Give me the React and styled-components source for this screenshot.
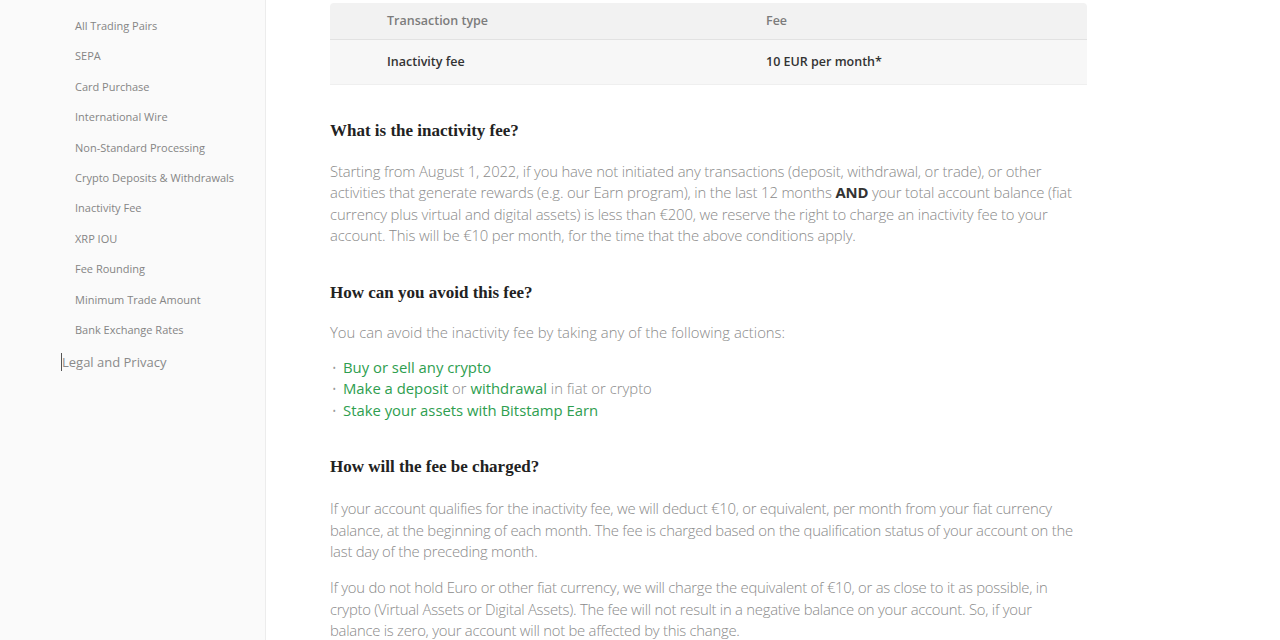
import React from "react";
import styled, { createGlobalStyle } from "styled-components";

const GlobalStyle = createGlobalStyle`
  html, body {
    margin: 0;
    padding: 0;
    background: #fff;
    font-family: "Open Sans", "Liberation Sans", sans-serif;
  }
`;

const Page = styled.div`
  display: flex;
  width: 1280px;
  height: 640px;
  overflow: hidden;
`;

const Sidebar = styled.nav`
  width: 266px;
  flex-shrink: 0;
  background: #fafafa;
  border-right: 1px solid #ececec;
  padding-top: 18px;
  box-sizing: border-box;
`;

const SubLink = styled.a`
  display: block;
  padding-left: 75px;
  height: 30.4px;
  font-size: 11px;
  line-height: 16px;
  color: #858585;
  text-decoration: none;
`;

const TopLink = styled.a`
  display: block;
  margin-left: 61px;
  font-size: 13px;
  line-height: 18px;
  color: #8a8a8a;
  text-decoration: none;
  margin-top: 1px;
  border-left: 1px solid #555;
`;

const Main = styled.main`
  flex: 1;
  padding: 3px 0 0 64px;
`;

const Content = styled.div`
  width: 757px;
`;

const Table = styled.div`
  display: grid;
  grid-template-columns: 379px 1fr;
  font-size: 12.5px;
  margin-bottom: 35px;
`;

const HeadCell = styled.div`
  background: #f2f2f2;
  height: 36px;
  line-height: 36px;
  padding-left: 57px;
  color: #7c7c7c;
  font-weight: 600;
  border-bottom: 1px solid #e2e2e2;
  border-radius: ${p => (p.$first ? "4px 0 0 0" : "0 4px 0 0")};
`;

const Cell = styled.div`
  background: #f7f7f7;
  height: 44px;
  line-height: 44px;
  padding-left: 57px;
  color: #333;
  font-weight: 600;
  border-bottom: 1px solid #efefef;
`;

const Heading = styled.h3`
  font-family: "Liberation Serif", "DejaVu Serif", serif;
  font-weight: bold;
  font-size: 17px;
  line-height: 22px;
  color: #222;
  margin: 0 0 ${p => p.$gap || 19}px;
`;

const Para = styled.p`
  font-size: 14.85px;
  font-weight: 300;
  line-height: 21.4px;
  color: #8a8a8a;
  letter-spacing: ${p => p.$spacing || 0}px;
  margin: 0 0 ${p => (p.$gap !== undefined ? p.$gap : 35)}px;
`;

const Strong = styled.b`
  font-weight: 700;
  color: #333;
  line-height: 1;
`;

const List = styled.ul`
  list-style: none;
  margin: 0 0 35px;
  padding: 0;
`;

const Item = styled.li`
  font-size: 14.85px;
  line-height: 21.4px;
  color: #8a8a8a;
  font-weight: 300;
  padding-left: 13px;
  position: relative;
  &::before {
    content: "•";
    position: absolute;
    left: 2px;
    top: 1px;
    color: #999;
    font-size: 12px;
  }
`;

const Green = styled.a`
  color: #2e9e4f;
  font-weight: 400;
  text-decoration: none;
`;

const subLinks = [
  "All Trading Pairs",
  "SEPA",
  "Card Purchase",
  "International Wire",
  "Non-Standard Processing",
  "Crypto Deposits & Withdrawals",
  "Inactivity Fee",
  "XRP IOU",
  "Fee Rounding",
  "Minimum Trade Amount",
  "Bank Exchange Rates"
];

export default function App() {
  return (
    <Page>
      <GlobalStyle />
      <Sidebar>
        {subLinks.map(l => (
          <SubLink key={l}>{l}</SubLink>
        ))}
        <TopLink>Legal and Privacy</TopLink>
      </Sidebar>
      <Main>
        <Content>
          <Table>
            <HeadCell $first>Transaction type</HeadCell>
            <HeadCell>Fee</HeadCell>
            <Cell>Inactivity fee</Cell>
            <Cell>10 EUR per month*</Cell>
          </Table>

          <Heading>What is the inactivity fee?</Heading>
          <Para $spacing={-0.16}>
            Starting from August 1, 2022, if you have not initiated any transactions (deposit,
            withdrawal, or trade), or other
            <br />
            activities that generate rewards (e.g. our Earn program), in the last 12 months{" "}
            <Strong>AND</Strong> your total account balance (fiat
            <br />
            currency plus virtual and digital assets) is less than €200, we reserve the right to
            charge an inactivity fee to your
            <br />
            account. This will be €10 per month, for the time that the above conditions apply.
          </Para>

          <Heading $gap={18}>How can you avoid this fee?</Heading>
          <Para $gap={14}>You can avoid the inactivity fee by taking any of the following actions:</Para>
          <List>
            <Item>
              <Green>Buy or sell any crypto</Green>
            </Item>
            <Item>
              <Green>Make a deposit</Green> or <Green>withdrawal</Green> in fiat or crypto
            </Item>
            <Item>
              <Green>Stake your assets with Bitstamp Earn</Green>
            </Item>
          </List>

          <Heading $gap={20}>How will the fee be charged?</Heading>
          <Para $spacing={-0.25} $gap={15}>
            If your account qualifies for the inactivity fee, we will deduct €10, or equivalent, per
            month from your fiat currency
            <br />
            balance, at the beginning of each month. The fee is charged based on the qualification
            status of your account on the
            <br />
            last day of the preceding month.
          </Para>
          <Para $spacing={-0.25}>
            If you do not hold Euro or other fiat currency, we will charge the equivalent of €10, or
            as close to it as possible, in
            <br />
            crypto (Virtual Assets or Digital Assets). The fee will not result in a negative balance
            on your account. So, if your
            <br />
            balance is zero, your account will not be affected by this change.
          </Para>
        </Content>
      </Main>
    </Page>
  );
}
